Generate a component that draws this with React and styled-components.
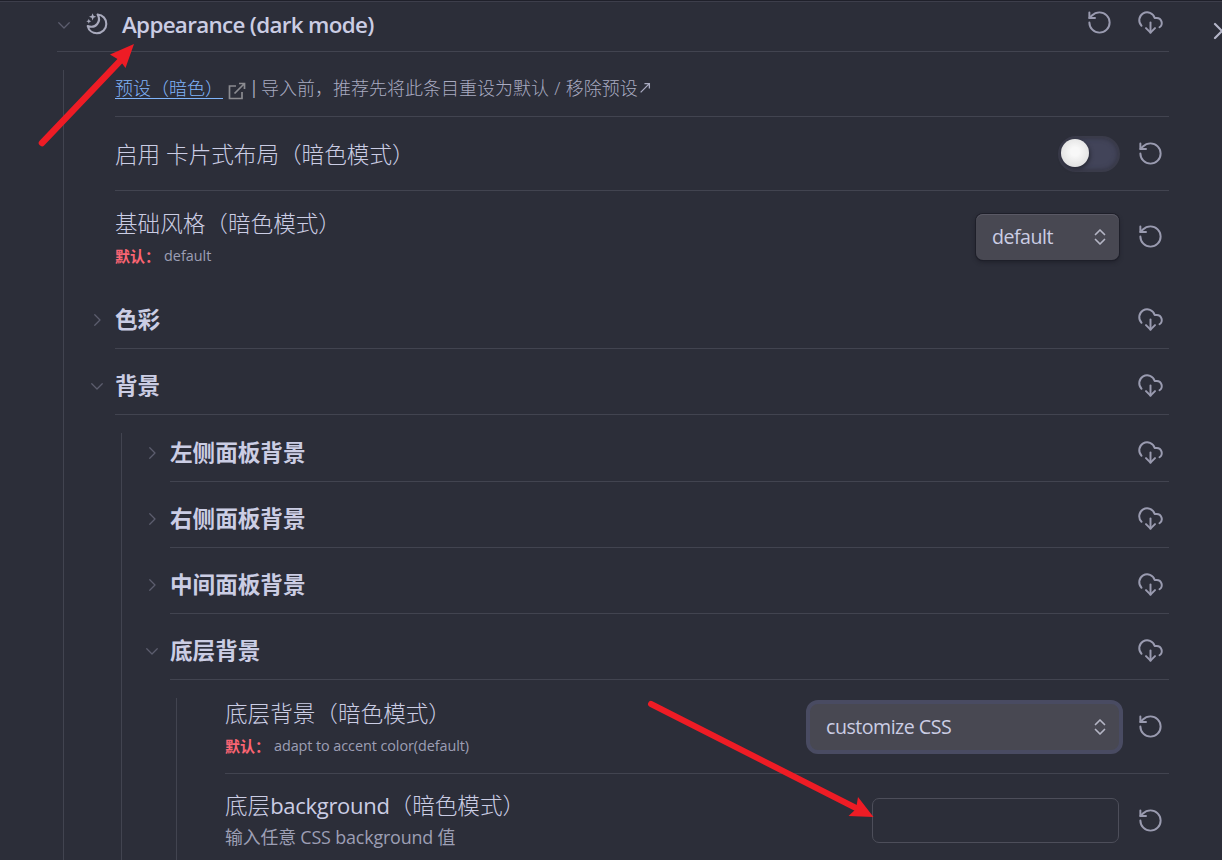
import React from 'react';
import styled, { createGlobalStyle, css } from 'styled-components';

const Global = createGlobalStyle`
  * { box-sizing: border-box; }
  body {
    margin: 0;
    background: #2c2e39;
    color: #cbcde4;
    font-family: 'Open Sans', 'Noto Sans CJK SC', sans-serif;
    overflow: hidden;
  }
`;

const Page = styled.main`
  position: relative;
  height: 860px;
  overflow: hidden;
  padding: 2px 53px 0 57px;
  background: linear-gradient(#1f202a 0 1px, #3d3e4b 1px 2px, #2c2e39 2px);
`;

const iconStyle = css`
  flex: none;
  fill: none;
  stroke: #9a9bb0;
  stroke-width: 1.75;
  stroke-linecap: round;
  stroke-linejoin: round;
`;

const IconSvg = styled.svg`
  ${iconStyle}
  width: 27px;
  height: 27px;
`;

const ChevronSvg = styled.svg`
  ${iconStyle}
  width: 18px;
  height: 18px;
  stroke: #5c5d6e;
  stroke-width: 1.7;
  transform: rotate(${(p) => (p.$open ? 90 : 0)}deg);
`;

const Chevron = ({ open }) => (
  <ChevronSvg viewBox="0 0 24 24" $open={open}>
    <path d="m9 5 7 7-7 7" />
  </ChevronSvg>
);

const Reset = () => (
  <IconSvg viewBox="0 0 24 24">
    <path d="M3 12a9 9 0 1 0 9-9 9.75 9.75 0 0 0-6.74 2.74L3 8" />
    <path d="M3 3v5h5" />
  </IconSvg>
);

const CloudDownload = () => (
  <IconSvg viewBox="0 0 24 24">
    <path d="M4 14.899A7 7 0 1 1 15.71 8h1.79a4.5 4.5 0 0 1 2.5 8.242" />
    <path d="M12 12v9" />
    <path d="m8 17 4 4 4-4" />
  </IconSvg>
);

const MoonSvg = styled.svg`
  width: 24px;
  height: 24px;
  flex: none;
  margin: -3px 13px 0 12px;
  fill: #a9aabd;
`;

const Moon = () => (
  <MoonSvg viewBox="0 0 24 24">
    <path
      d="M12.600 2.500C17.900 2.900 21.300 7 21.300 11.900C21.300 17.200 17.100 21.300 11.900 21.300C7.500 21.300 3.700 18.300 2.700 14C6.200 15.300 10 14.700 12.200 12C14.400 9.400 14.500 5.700 12.600 2.500Z"
      fill="none"
      stroke="#a9aabd"
      strokeWidth="2.1"
      strokeLinejoin="round"
    />
    <path d="M7.600 1.200L8.600 3.800L11.200 4.800L8.600 5.800L7.600 8.400L6.600 5.800L4 4.800L6.600 3.800Z" />
    <path d="M3.800 6.700L4.500 8.500L6.300 9.200L4.500 9.900L3.800 11.700L3.100 9.900L1.300 9.200L3.100 8.500Z" />
  </MoonSvg>
);

const Header = styled.header`
  display: flex;
  align-items: center;
  height: 50px;
  padding: 0 5px 3px 0;
  border-bottom: 1px solid #424450;

  > ${ChevronSvg} {
    margin-left: -2px;
  }
`;

const Title = styled.h1`
  margin: 0;
  font-size: 22.4px;
  font-weight: 600;
  line-height: 32px;
  letter-spacing: -0.68px;
  white-space: nowrap;
`;

const Actions = styled.div`
  display: flex;
  align-items: center;
  gap: 24px;
  margin-left: auto;
`;

const HeaderActions = styled(Actions)`
  margin-top: -5px;
`;

const GroupActions = styled(Actions)`
  margin-top: -2px;
`;

const Body = styled.section`
  margin: 18px 0 0 6px;
  padding-left: ${(p) => p.$indent}px;
  border-left: 1px solid #424450;
  height: 900px;
`;

const Heading = styled.div`
  display: flex;
  align-items: center;
  height: 49px;
  margin-top: ${(p) => (p.$first ? 0 : 17)}px;
  padding: 0 5px 8px 0;
  border-bottom: 1px solid #424450;

  > ${ChevronSvg} {
    margin: 0 9px 0 -27px;
  }
`;

const HeadingText = styled.h2`
  margin: 0;
  font-size: 22.6px;
  font-weight: 700;
  line-height: 32px;
`;

const Row = styled.div`
  display: flex;
  align-items: center;
  height: ${(p) => p.$height}px;
  padding: 0 5px ${(p) => p.$bottom || 0}px 0;
  border-bottom: 1px solid ${(p) => (p.$plain ? 'transparent' : '#424450')};
`;

const Info = styled.div`
  padding-top: ${(p) => p.$top || 0}px;
  white-space: nowrap;
`;

const Label = styled.div`
  font-size: 22.6px;
  font-weight: 300;
  line-height: 32px;
`;

const Latin = styled.span`
  font-size: 22px;
  font-weight: 400;
  letter-spacing: -0.3px;
`;

const Description = styled.div`
  display: flex;
  align-items: center;
  font-size: ${(p) => p.$size || 14.4}px;
  font-weight: ${(p) => p.$weight || 400};
  letter-spacing: ${(p) => p.$spacing || 0}px;
  line-height: ${(p) => p.$line || 32}px;
  color: #9d9fb5;
`;

const DefaultTag = styled.strong`
  width: 49px;
  font-size: 15px;
  letter-spacing: 0;
  color: #fb6573;
`;

const Preset = styled.p`
  display: flex;
  align-items: center;
  margin: 0;
  font-size: 18px;
  line-height: 26px;
  color: #a9abc1;
  white-space: nowrap;
`;

const PresetText = styled.span`
  margin-top: -1px;
  font-weight: 300;
  word-spacing: 0.6px;
`;

const Divider = styled.span`
  width: 9px;
  margin-top: -2px;
  text-indent: -3px;
`;

const SmallArrow = styled.svg`
  width: 12px;
  height: 12px;
  margin-left: 1px;
  fill: none;
  stroke: #a9abc1;
  stroke-width: 1.2;
`;

const Link = styled.a`
  width: 108px;
  margin-top: -1px;
  font-weight: 300;
  color: #80b5fb;
  text-decoration: underline;
  text-underline-offset: 3px;
`;

const ExternalSvg = styled.svg`
  width: 18px;
  height: 18px;
  margin: 5px 6px 0 5px;
  fill: none;
  stroke: #8b8b90;
  stroke-width: 1.7;
`;

const Toggle = styled.span`
  width: 62px;
  height: 36px;
  padding: 2px;
  border: 2px solid #3a3b4a;
  border-radius: 18px;
  background: #424459;
  box-shadow: inset 0 0 5px #30313e;
`;

const Knob = styled.span`
  display: block;
  width: 28px;
  height: 28px;
  margin: -1px 0 0 -1px;
  border-radius: 50%;
  background: radial-gradient(circle at 50% 45%, #f8f8f8 20%, #d6d6d6 100%);
  box-shadow: 1px 2px 4px #252631;
`;

const Select = styled.div`
  display: flex;
  align-items: center;
  justify-content: space-between;
  width: ${(p) => p.$width}px;
  height: 46px;
  margin-right: 1px;
  padding: 0 12px 0 16px;
  border-radius: 7px;
  background: #484852;
  font-size: 19.6px;
  letter-spacing: -0.5px;
  ${(p) =>
    p.$focused
      ? css`
          height: 54px;
          border: 4px solid #494b62;
          border-radius: 12px;
          margin: 0 -3px 0 0;
        `
      : css`
          box-shadow: 0 0 0 1px #1e1f29, 0 2px 4px #1e1f29, inset 0 1px 0 #5a5965;
        `}
`;

const ArrowsSvg = styled.svg`
  width: 14px;
  height: 18px;
  fill: none;
  stroke: #b4b5c4;
  stroke-width: 1.7;
  stroke-linecap: round;
  stroke-linejoin: round;
`;

const Arrows = () => (
  <ArrowsSvg viewBox="0 0 14 18">
    <path d="M2.500 6.500 7 2l4.500 4.500M2.500 11.500 7 16l4.500-4.500" />
  </ArrowsSvg>
);

const Controls = styled(Actions)`
  gap: 17px;
`;

const TextInput = styled.input`
  width: 247px;
  height: 45px;
  margin-right: 1px;
  border: 1px solid #4d4e5a;
  border-radius: 7px;
  background: transparent;
`;

const Close = styled.svg`
  ${iconStyle}
  position: absolute;
  left: 1213px;
  top: 22px;
  width: 18px;
  height: 18px;
  stroke: #b4b5c8;
  stroke-width: 2.2;
`;

const Annotations = styled.svg`
  position: absolute;
  inset: 0;
  width: 1222px;
  height: 860px;
  pointer-events: none;
  fill: #ee1c25;
  stroke: #ee1c25;
  stroke-linecap: round;
`;

const Group = ({ children, open, first }) => (
  <Heading $first={first}>
    <Chevron open={open} />
    <HeadingText>{children}</HeadingText>
    <GroupActions>
      <CloudDownload />
    </GroupActions>
  </Heading>
);

export default function App() {
  return (
    <>
      <Global />
      <Page>
        <Header>
          <Chevron open />
          <Moon />
          <Title>Appearance (dark mode)</Title>
          <HeaderActions>
            <Reset />
            <CloudDownload />
          </HeaderActions>
        </Header>

        <Body $indent={51}>
          <Row $height={47} $bottom={10}>
            <Preset>
              <Link>预设（暗色）</Link>
              <ExternalSvg viewBox="0 0 18 18">
                <path d="M8 4H1.500v12.500H14V10M11 1.500h5.500V7M16.500 1.500 6.500 11.500" />
              </ExternalSvg>
              <Divider>|</Divider>
              <PresetText>导入前，推荐先将此条目重设为默认 / 移除预设</PresetText>
              <SmallArrow viewBox="0 0 11 11">
                <path d="M1.500 9.500 9.500 1.500M5 1.500h4.500V6" />
              </SmallArrow>
            </Preset>
          </Row>
          <Row $height={74}>
            <Info $top={2}>
              <Label>启用 卡片式布局（暗色模式）</Label>
            </Info>
            <Controls>
              <Toggle>
                <Knob />
              </Toggle>
              <Reset />
            </Controls>
          </Row>
          <Row $height={92} $plain>
            <Info $top={6}>
              <Label>基础风格（暗色模式）</Label>
              <Description>
                <DefaultTag>默认：</DefaultTag>default
              </Description>
            </Info>
            <Controls>
              <Select $width={143}>
                default
                <Arrows />
              </Select>
              <Reset />
            </Controls>
          </Row>
          <Group>色彩</Group>
          <Group open>背景</Group>

          <Body $indent={48}>
            <Group first>左侧面板背景</Group>
            <Group>右侧面板背景</Group>
            <Group>中间面板背景</Group>
            <Group open>底层背景</Group>

            <Body $indent={48}>
              <Row $height={76} $bottom={18}>
                <Info $top={6}>
                  <Label>底层背景（暗色模式）</Label>
                  <Description $spacing={-0.07}>
                    <DefaultTag>默认：</DefaultTag>adapt to accent color(default)
                  </Description>
                </Info>
                <Controls>
                  <Select $width={317} $focused>
                    customize CSS
                    <Arrows />
                  </Select>
                  <Reset />
                </Controls>
              </Row>
              <Row $height={93} $plain>
                <Info $top={1}>
                  <Label>
                    底层<Latin>background</Latin>（暗色模式）
                  </Label>
                  <Description $size={17.9} $spacing={-0.17} $line={31}>
                    输入任意 CSS background 值
                  </Description>
                </Info>
                <Controls>
                  <TextInput />
                  <Reset />
                </Controls>
              </Row>
            </Body>
          </Body>
        </Body>

        <Close viewBox="0 0 18 18">
          <path d="m2 2 14 14M16 2 2 16" />
        </Close>
        <Annotations viewBox="0 0 1222 860">
          <path d="M42 143 121 60" strokeWidth="6.500" />
          <path d="M134 44 125.500 68 120 60.500 110 54.500Z" stroke="none" />
          <path d="M651 704 856 808" strokeWidth="6" />
          <path d="M873.500 817 848.500 816 856 809 858 797Z" stroke="none" />
        </Annotations>
      </Page>
    </>
  );
}
